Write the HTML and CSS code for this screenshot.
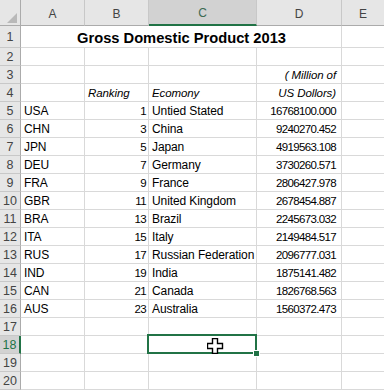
FILE: index.html
```html
<!DOCTYPE html>
<html lang="en">
<head>
    <meta charset="UTF-8">
    <meta name="viewport" content="width=device-width, initial-scale=1.0">
    <title>Gross Domestic Product 2013</title>
    <link rel="stylesheet" href="styles.css">
</head>
<body>
    <div class="sheet" id="sheet"></div>

    <script>
        // GDP 2013 data, rows 5 - 16
        const countries = [
            ['USA', 1, 'Untied Stated', '16768100.000'],
            ['CHN', 3, 'China', '9240270.452'],
            ['JPN', 5, 'Japan', '4919563.108'],
            ['DEU', 7, 'Germany', '3730260.571'],
            ['FRA', 9, 'France', '2806427.978'],
            ['GBR', 11, 'United Kingdom', '2678454.887'],
            ['BRA', 13, 'Brazil', '2245673.032'],
            ['ITA', 15, 'Italy', '2149484.517'],
            ['RUS', 17, 'Russian Federation', '2096777.031'],
            ['IND', 19, 'India', '1875141.482'],
            ['CAN', 21, 'Canada', '1826768.563'],
            ['AUS', 23, 'Australia', '1560372.473']
        ];

        const data = {
            3: { D: ['( Million of', 'right italic'] },
            4: { B: ['Ranking', 'italic'], C: ['Ecomony', 'italic'], D: ['US Dollors)', 'right italic'] }
        };
        countries.forEach((c, i) => {
            data[i + 5] = {
                A: [c[0], ''],
                B: [c[1], 'right digits'],
                C: [c[2], ''],
                D: [c[3], 'right digits']
            };
        });

        const sheet = document.getElementById('sheet');
        const cols = ['A', 'B', 'C', 'D', 'E'];

        function addCell(text, cls) {
            const div = document.createElement('div');
            div.className = cls;
            if (text !== undefined && text !== '') {
                const span = document.createElement('span');
                span.textContent = text;
                div.appendChild(span);
            }
            sheet.appendChild(div);
            return div;
        }

        // column headers
        addCell('', 'corner');
        cols.forEach(col => {
            addCell(col, col === 'C' ? 'col-head selected' : 'col-head');
        });

        for (let r = 1; r <= 20; r++) {
            addCell(r, r === 18 ? 'row-head selected' : 'row-head');
            if (r === 1) {
                addCell('Gross Domestic Product 2013', 'cell title');
                addCell('', 'cell');
                continue;
            }
            cols.forEach(col => {
                const entry = (data[r] || {})[col];
                const cls = 'cell col-' + col.toLowerCase() + ' ' + (entry ? entry[1] : '');
                const cell = addCell(entry ? entry[0] : '', cls);
                if (r === 18 && col === 'C') {
                    cell.classList.add('active');
                    cell.innerHTML = '<svg class="cursor" width="17" height="16" viewBox="0 0 17 16"><path d="M5.5 0.5h5v5h5v5h-5v5h-5v-5h-5v-5h5z" fill="#fff" stroke="#000" stroke-width="1.4"/></svg>';
                }
            });
        }
    </script>
</body>
</html>
```

FILE: styles.css
```css
body {
    margin: 0;
    padding: 0;
    background-color: #ffffff;
    font-family: "Liberation Sans", Arial, sans-serif;
    overflow: hidden;
}
.sheet {
    display: grid;
    grid-template-columns: 21px 64px 64px 108px 85px 43px;
    grid-template-rows: 26px 22px repeat(19, 18px);
    width: 384px;
}
.corner,
.col-head,
.row-head {
    background-color: #e6e6e6;
    color: #444;
    font-size: 12px;
    box-sizing: border-box;
    display: flex;
    align-items: center;
    justify-content: center;
}
.corner {
    position: relative;
    border-right: 1px solid #ababab;
    border-bottom: 1px solid #ababab;
}
.corner::after {
    content: "";
    position: absolute;
    right: 3px;
    bottom: 2px;
    width: 10px;
    height: 10px;
    background-color: #b9b9b9;
    clip-path: polygon(100% 0, 100% 100%, 0 100%);
}
.col-head {
    border-right: 1px solid #c8c8c8;
    border-bottom: 1px solid #ababab;
    padding-top: 2px;
}
.col-head.selected {
    background-color: #d2d2d2;
    color: #3d6b52;
    border-bottom: 2px solid #217346;
}
.row-head {
    border-right: 1px solid #ababab;
    border-bottom: 1px solid #c8c8c8;
    font-size: 12.5px;
}
.row-head.selected {
    background-color: #d2d2d2;
    color: #217346;
    border-right: 2px solid #217346;
}
.cell {
    box-sizing: border-box;
    border-right: 1px solid #d9d9d9;
    border-bottom: 1px solid #d9d9d9;
    padding: 0 2px 0 3px;
    font-size: 12px;
    letter-spacing: -0.1px;
    color: #000;
    line-height: 18px;
    white-space: nowrap;
    overflow: hidden;
    display: flex;
    align-items: center;
}
.cell span {
    padding-top: 1px;
}
.col-d {
    padding-right: 5px;
}
.right {
    justify-content: flex-end;
}
.digits {
    font-size: 11.5px;
    letter-spacing: -0.65px;
}
.italic {
    font-style: italic;
    font-size: 11.5px;
}
.title {
    grid-column: span 4;
    justify-content: center;
    font-weight: bold;
    font-size: 14.7px;
    letter-spacing: 0;
    padding-top: 1px;
}
.active {
    position: relative;
    overflow: visible;
}
.active::before {
    content: "";
    position: absolute;
    left: -2px;
    top: -2px;
    right: -1px;
    bottom: -1px;
    border: 2px solid #217346;
}
.active::after {
    content: "";
    position: absolute;
    right: -4px;
    bottom: -4px;
    width: 5px;
    height: 5px;
    background-color: #217346;
    border: 1px solid #fff;
}
.cursor {
    position: absolute;
    left: 58px;
    top: 2px;
}
```
